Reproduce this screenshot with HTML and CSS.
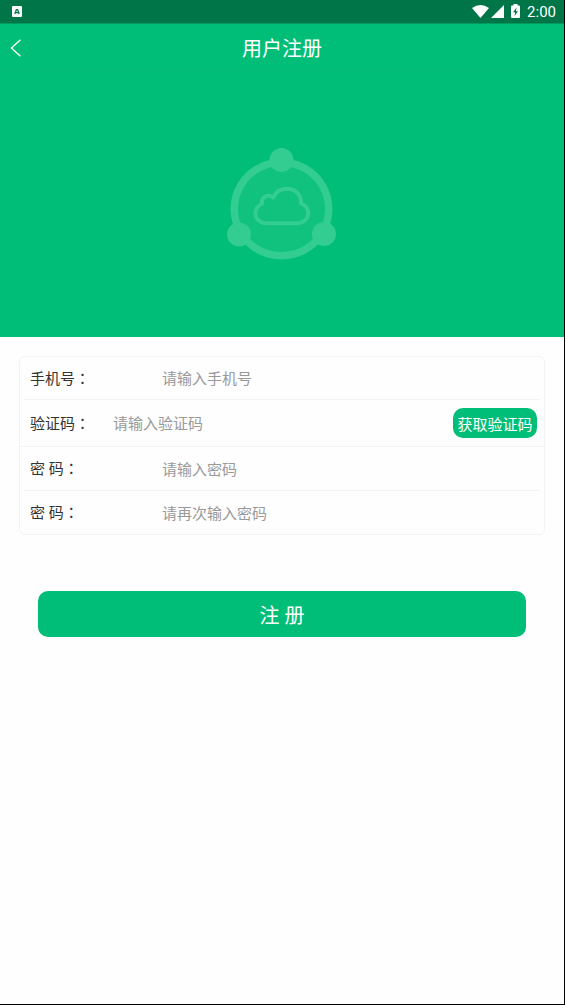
FILE: index.html
```html
<!DOCTYPE html>
<html lang="zh-CN">
<head>
<meta charset="utf-8">
<meta name="viewport" content="width=device-width, initial-scale=1">
<title>用户注册</title>
<link rel="stylesheet" href="styles.css">
</head>
<body>
<div class="screen">
  <div class="status">
    <svg class="status-app" width="10" height="11" viewBox="0 0 10 11" aria-hidden="true">
      <rect width="10" height="11" rx="1" fill="#fff"/>
      <path d="M2.800 8 4.400 3.600h1.200L7.200 8M3.600 6.600h2.800" fill="none" stroke="#007547" stroke-width="1.300"/>
    </svg>
    <div class="status-right">
      <svg width="17" height="13" viewBox="0 0 17 13" aria-hidden="true"><path d="M0 3Q8.500-3 17 3L8.500 13Z" fill="#fff"/></svg>
      <svg class="signal" width="13" height="13" viewBox="0 0 13 13" aria-hidden="true"><path d="M13 0v13H0Z" fill="#fff"/></svg>
      <svg class="battery" width="9" height="14" viewBox="0 0 9 14" aria-hidden="true">
        <path d="M2.500 0h4v1.500H8q1 0 1 1V13q0 1-1 1H1q-1 0-1-1V2.500q0-1 1-1h1.500Z" fill="#fff"/>
        <path d="M5.500 3.500 2 8.300h2.100L3.500 12 7 7.200H4.900Z" fill="#007547"/>
      </svg>
      <span class="clock">2:00</span>
    </div>
  </div>
  <header class="bar">
    <button class="back" type="button" aria-label="返回">
      <svg width="12" height="18" viewBox="0 0 12 18" aria-hidden="true"><path d="M10.500.8 1.500 9l9 8.200" fill="none" stroke="#fff" stroke-width="1.300"/></svg>
    </button>
    <h1 class="title">用户注册</h1>
  </header>
  <div class="hero">
    <svg width="112" height="113" viewBox="0 0 112 113" aria-hidden="true">
      <circle cx="55.500" cy="61" r="47" fill="#10c27e"/>
      <g fill="#33cc91">
        <path fill-rule="evenodd" d="M55.500 10.500a51 50.500 0 1 0 .01 0ZM55.500 18a43.500 43 0 1 1-.01 0Z"/>
        <circle cx="55.500" cy="12" r="12"/>
        <circle cx="13" cy="86.500" r="12"/>
        <circle cx="98" cy="86" r="12"/>
      </g>
      <path d="M38.800 75.200h34a10.200 10.200 0 0 0 2.200-19.900C75.500 46 68.500 40.700 60.500 40.700 54.500 40.700 49.500 44 47.500 49.500 41.500 45.500 35 49.500 36 55.800A10 10 0 0 0 38.800 75.200Z" fill="none" stroke="#33cc91" stroke-width="4" stroke-linejoin="round"/>
    </svg>
  </div>
  <form class="form">
    <div class="card">
      <div class="row inset">
        <label class="label wide" for="phone">手机号<span class="colon" lang="zh-TW">：</span></label>
        <input class="field" id="phone" type="tel" placeholder="请输入手机号">
      </div>
      <div class="row code">
        <label class="label" for="code">验证码<span class="colon" lang="zh-TW">：</span></label>
        <input class="field" id="code" type="text" placeholder="请输入验证码">
        <button class="get-code" type="button">获取验证码</button>
      </div>
      <div class="row inset">
        <label class="label wide" for="pwd">密 码<span class="colon" lang="zh-TW">：</span></label>
        <input class="field" id="pwd" type="password" placeholder="请输入密码">
      </div>
      <div class="row">
        <label class="label wide" for="pwd2">密 码<span class="colon" lang="zh-TW">：</span></label>
        <input class="field" id="pwd2" type="password" placeholder="请再次输入密码">
      </div>
    </div>
    <button class="submit" type="submit">注 册</button>
  </form>
</div>
</body>
</html>
```
FILE: styles.css
```css
* {
  box-sizing: border-box;
}

body {
  margin: 0;
  font-family: Roboto, "Noto Sans CJK SC", sans-serif;
  color: #333;
}

button,
input {
  font-family: inherit;
  border: 0;
  padding: 0;
}

.screen {
  min-height: 100vh;
  background: #fefefe;
  border-right: 1px solid #000;
  border-bottom: 1px solid #000;
}

.status {
  display: flex;
  align-items: center;
  justify-content: space-between;
  height: 24px;
  padding: 0 8px 0 12px;
  background: #007547;
  border-bottom: 1px solid #009a5e;
}

.status-right {
  display: flex;
  align-items: center;
}

.signal {
  margin-left: 2px;
}

.battery {
  margin: 0 7px 2px 7px;
}

.clock {
  font-size: 15px;
  line-height: 24px;
  color: #fff;
}

.bar {
  display: grid;
  grid-template-columns: 48px 1fr 48px;
  align-items: center;
  height: 48px;
  background: #00be78;
  border-bottom: 1px solid #04ba77;
}

.back {
  display: flex;
  align-items: center;
  height: 46px;
  padding-left: 10px;
  background: none;
}

.title {
  margin: 0;
  font-size: 20px;
  line-height: 30px;
  padding-top: 2px;
  font-weight: 400;
  text-align: center;
  color: #fff;
}

.hero {
  display: flex;
  justify-content: center;
  padding: 76px 0;
  background: #00be78;
}

.form {
  padding: 19px;
}

.card {
  border: 1px solid #f3f3f3;
  border-radius: 6px;
}

.row {
  display: flex;
  align-items: center;
  height: 43px;
  padding: 0 7px 0 10px;
}

.inset {
  margin: 0 4px;
  padding: 0 3px 0 6px;
  border-bottom: 1px solid #f3f3f3;
}

.code {
  height: 47px;
  border-bottom: 1px solid #f3f3f3;
}

.code + .row {
  height: 44px;
}

.label {
  flex: none;
  width: 83px;
  font-size: 15px;
  line-height: 24px;
}

.wide {
  width: 132px;
}

.colon {
  font-family: "Noto Sans CJK TC", sans-serif;
}

.field {
  flex: 1;
  min-width: 0;
  height: 30px;
  padding-top: 2px;
  font-size: 15px;
  background: none;
  color: #333;
}

.field::placeholder {
  color: #999;
}

.get-code {
  flex: none;
  width: 84px;
  height: 30px;
  border-radius: 10px;
  font-size: 15px;
  background: #00be78;
  color: #fff;
}

.submit {
  display: block;
  width: calc(100% - 38px);
  height: 46px;
  margin: 56px auto 0;
  border-radius: 10px;
  font-size: 20px;
  background: #00be78;
  color: #fff;
}
```
